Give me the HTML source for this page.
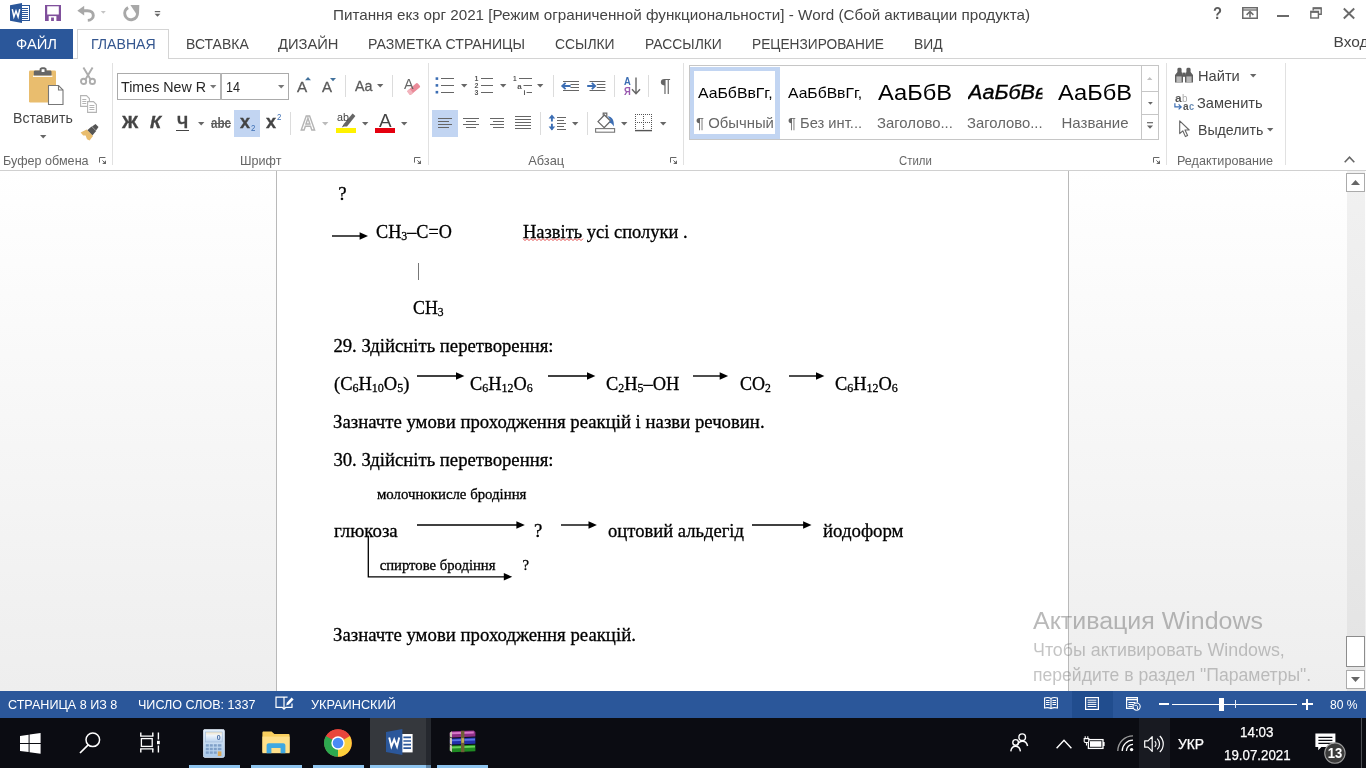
<!DOCTYPE html>
<html lang="ru"><head><meta charset="utf-8"><title>Word</title><style>
html,body{margin:0;padding:0}
body{width:1366px;height:768px;overflow:hidden;position:relative;background:#fff;font-family:"Liberation Sans",sans-serif}
#all{position:absolute;left:0;top:0;width:1366px;height:768px;overflow:hidden;will-change:transform}
.t{position:absolute;white-space:pre;line-height:1;transform-origin:0 0}
.a{position:absolute}
svg{position:absolute;overflow:visible}
sub{font-size:65%;vertical-align:baseline;position:relative;top:0.18em;line-height:0}
</style></head><body><div id="all">
<div class="a" style="left:0;top:29px;width:73px;height:30px;background:#2b579a"></div>
<div class="a" style="left:0;top:58px;width:1366px;height:1px;background:#d4d4d4"></div>
<div class="a" style="left:77px;top:29px;width:92px;height:30px;background:#fff;border:1px solid #d4d4d4;border-bottom:none;box-sizing:border-box"></div>
<div class="a" style="left:0;top:29px;width:73px;height:30px;background:#2b579a"></div>
<svg style="left:10px;top:3px" width="20" height="20" viewBox="0 0 20 20">
<rect x="9" y="2.5" width="10.5" height="15" fill="#fff" stroke="#2b579a" stroke-width="1"/>
<g stroke="#2b579a" stroke-width="1"><path d="M12 5.5h6M12 7.5h6M12 9.5h6M12 11.5h6M12 13.5h6M12 15.5h6"/></g>
<path d="M0 2.2 L12 0 V20 L0 17.8Z" fill="#2b579a"/>
<path d="M2.3 6.2 L3.9 13.8 L6 8 L8.1 13.8 L9.7 6.2" fill="none" stroke="#fff" stroke-width="1.5" stroke-linejoin="miter"/>
</svg>
<svg style="left:45px;top:5px" width="16" height="16" viewBox="0 0 16 16">
<path d="M0 0H16V16H0Z" fill="#80509c"/>
<rect x="2.2" y="1.3" width="11.6" height="8.2" fill="#fff"/>
<rect x="3.7" y="11.1" width="7.7" height="4.9" fill="#fff"/>
<rect x="6.1" y="12.5" width="2.8" height="3.5" fill="#80509c"/>
</svg>
<svg style="left:77px;top:5px" width="32" height="18" viewBox="0 0 32 18">
<path d="M6.5 5.7 H10.5 C14.5 5.7 16.3 8 16.3 10.4 C16.3 13 14 15.2 10.8 15.4" fill="none" stroke="#a8a8a8" stroke-width="2.9"/>
<path d="M0.3 5.8 L7.2 0.8 V10.6 Z" fill="#a8a8a8"/>
<path d="M23.8 6 h5 l-2.5 2.7z" fill="#c4c4c4"/>
</svg>
<svg style="left:122px;top:4px" width="18" height="18" viewBox="0 0 18 18">
<path d="M6.10 3.65 A6.4 6.4 0 1 0 15.48 8.74" fill="none" stroke="#a8a8a8" stroke-width="3"/>
<path d="M8.4 1.1 H17.3 L17 9.6 L14 9.4 Z" fill="#a8a8a8"/>
</svg>
<svg style="left:154px;top:10px" width="7" height="8" viewBox="0 0 7 8">
<rect x="0.8" y="1" width="5.4" height="1.2" fill="#666"/><path d="M0.6 3.8h5.8L3.5 6.8z" fill="#666"/></svg>
<svg style="left:1242px;top:7px" width="16" height="12" viewBox="0 0 16 12">
<rect x="0.75" y="0.75" width="14.5" height="10.5" fill="none" stroke="#6a6a6a" stroke-width="1.5"/>
<path d="M1 3h14" stroke="#6a6a6a" stroke-width="1.3"/>
<path d="M8 10.4V4.8M4.6 7.9 L8 4.5 L11.4 7.9" fill="none" stroke="#6a6a6a" stroke-width="1.5"/></svg>
<div class="a" style="left:1277px;top:14.5px;width:12px;height:2px;background:#6a6a6a"></div>
<svg style="left:1310px;top:7px" width="12" height="12" viewBox="0 0 12 12">
<path d="M3.2 3.5V0.9H11.2V7.3H8.6" fill="none" stroke="#6a6a6a" stroke-width="1.4"/>
<path d="M3.2 1.4H11.2" stroke="#6a6a6a" stroke-width="1.8"/>
<rect x="0.8" y="4.4" width="7.6" height="6.6" fill="none" stroke="#6a6a6a" stroke-width="1.4"/>
<path d="M0.8 5H8.4" stroke="#6a6a6a" stroke-width="1.8"/></svg>
<svg style="left:1343px;top:8px" width="12" height="11" viewBox="0 0 12 11">
<path d="M0.8 0.5 L11.2 10.5 M11.2 0.5 L0.8 10.5" stroke="#6a6a6a" stroke-width="1.9"/></svg>
<svg style="left:1344px;top:156px" width="11" height="7" viewBox="0 0 11 7">
<path d="M0.7 6.3 L5.5 1.2 L10.3 6.3" fill="none" stroke="#666" stroke-width="1.6"/></svg>
<div class="a" style="left:0;top:170px;width:1366px;height:1px;background:#d0d0d0"></div>
<div class="a" style="left:112px;top:63px;width:1px;height:102px;background:#e1e1e1"></div>
<div class="a" style="left:428px;top:63px;width:1px;height:102px;background:#e1e1e1"></div>
<div class="a" style="left:683px;top:63px;width:1px;height:102px;background:#e1e1e1"></div>
<div class="a" style="left:1166px;top:63px;width:1px;height:102px;background:#e1e1e1"></div>
<div class="a" style="left:1285px;top:63px;width:1px;height:102px;background:#e1e1e1"></div>
<svg style="left:28px;top:65px" width="37" height="41" viewBox="0 0 37 41">
<rect x="1" y="5.5" width="27" height="32" rx="1.2" fill="#e9bd6e"/>
<rect x="5" y="10.5" width="19.4" height="1.4" fill="#fff"/>
<path d="M5.8 10.5V7C5.8 6 6.4 5.5 7.4 5.5H11.6V4C11.6 1.6 18.6 1.6 18.6 4V5.5H22C23 5.5 23.5 6 23.5 7V10.5Z" fill="#666"/>
<rect x="13.6" y="4.2" width="2.9" height="2.8" fill="#fff"/>
<path d="M20.5 20.5H30.5L35 25V39.5H20.5Z" fill="#fff" stroke="#777" stroke-width="1.1"/>
<path d="M30.5 20.5V25H35" fill="none" stroke="#777" stroke-width="1.1"/>
</svg>
<svg style="left:39.8px;top:134.6px" width="6.4" height="3.4" viewBox="0 0 6.4 3.4"><path d="M0 0H6.4L3.2 3.4Z" fill="#666"/></svg>
<svg style="left:80px;top:67px" width="16" height="18" viewBox="0 0 16 18">
<g fill="none" stroke="#adadad" stroke-width="1.9"><path d="M3.4 0.6L10.6 12.4M12.6 0.6L5.4 12.4"/><circle cx="3.6" cy="14.4" r="2.6"/><circle cx="12.4" cy="14.4" r="2.6"/></g></svg>
<svg style="left:80px;top:95px" width="18" height="18" viewBox="0 0 18 18">
<g fill="#fff" stroke="#b4b4b4" stroke-width="1.1"><path d="M0.6 0.6H6.5L9.4 3.5V11.4H0.6Z"/><path d="M7.6 6.6H13.5L16.4 9.5V17.4H7.6Z"/></g>
<g stroke="#b4b4b4" stroke-width="1"><path d="M2.3 4.5h4M2.3 6.5h4M2.3 8.5h4M9.4 10.5h5M9.4 12.5h5M9.4 14.5h5"/></g></svg>
<svg style="left:80px;top:124px" width="19" height="17" viewBox="0 0 19 17">
<path d="M12 2.5L15.5 0L18.5 3L16 6.5Z" fill="#555"/>
<path d="M7.2 6.3L11.6 2.4L16.2 7L12.3 11.4Z" fill="#555"/>
<path d="M0.6 8.4L6.6 5.6L13 12L9.6 16.6L7 15.2L5.6 11.4L3.2 11.6Z" fill="#e9bd6e"/>
</svg>
<svg style="left:99px;top:157px" width="8" height="8" viewBox="0 0 8 8"><path d="M0.5 5.6V0.5H6.4" fill="none" stroke="#666" stroke-width="1"/><path d="M7 3.2V7H3.2Z" fill="#666"/><path d="M3.4 3.4L5.4 5.4" stroke="#666" stroke-width="1"/></svg>
<div class="a" style="left:117px;top:73px;width:172px;height:27px;border:1px solid #ababab;box-sizing:border-box;background:#fff"></div>
<div class="a" style="left:220px;top:73px;width:2px;height:27px;background:#b4b4b4"></div>
<svg style="left:209.8px;top:84.6px" width="6.4" height="3.4" viewBox="0 0 6.4 3.4"><path d="M0 0H6.4L3.2 3.4Z" fill="#777"/></svg>
<svg style="left:277.8px;top:84.6px" width="6.4" height="3.4" viewBox="0 0 6.4 3.4"><path d="M0 0H6.4L3.2 3.4Z" fill="#777"/></svg>
<svg style="left:305.2px;top:77px" width="6" height="3.2" viewBox="0 0 6 3.2"><path d="M0 3.2H6L3 0Z" fill="#41719c"/></svg>
<svg style="left:330.3px;top:78px" width="6" height="3.2" viewBox="0 0 6 3.2"><path d="M0 0H6L3 3.2Z" fill="#41719c"/></svg>
<div class="a" style="left:345px;top:75px;width:1px;height:22px;background:#dcdcdc"></div>
<svg style="left:376.8px;top:84.2px" width="6.4" height="3.4" viewBox="0 0 6.4 3.4"><path d="M0 0H6.4L3.2 3.4Z" fill="#666"/></svg>
<div class="a" style="left:392px;top:75px;width:1px;height:22px;background:#dcdcdc"></div>
<svg style="left:406px;top:82px" width="15" height="14" viewBox="0 0 15 14"><g transform="rotate(-40 7.5 7)"><rect x="1" y="4.4" width="13.4" height="5.4" rx="1.2" fill="#ea8a98"/><rect x="1" y="4.4" width="3.8" height="5.4" rx="1.2" fill="#f2b4bd"/></g></svg>
<div class="a" style="left:176px;top:129.6px;width:13px;height:1.6px;background:#444"></div>
<svg style="left:197.8px;top:122.0px" width="6.4" height="3.4" viewBox="0 0 6.4 3.4"><path d="M0 0H6.4L3.2 3.4Z" fill="#666"/></svg>
<div class="a" style="left:234px;top:110px;width:26px;height:27px;background:#c2d5f2"></div>
<div class="a" style="left:290px;top:112px;width:1px;height:23px;background:#dcdcdc"></div>
<svg style="left:299px;top:112px" width="18" height="20" viewBox="0 0 18 20"><text x="9" y="18.2" text-anchor="middle" font-family="Liberation Sans" font-size="20.5" font-weight="bold" fill="#fff" stroke="#b4b4b4" stroke-width="1.4" textLength="14.4" lengthAdjust="spacingAndGlyphs">A</text></svg>
<svg style="left:321.8px;top:122.0px" width="6.4" height="3.4" viewBox="0 0 6.4 3.4"><path d="M0 0H6.4L3.2 3.4Z" fill="#bbb"/></svg>
<svg style="left:341px;top:113px" width="16" height="15" viewBox="0 0 16 15"><path d="M11.6 0.6L14.4 3L6 13.4L2.8 13.6L3.2 10.6Z" fill="#666"/><path d="M2.8 13.6L0.8 14.4L3.2 10.6Z" fill="#444"/></svg>
<div class="a" style="left:336px;top:128px;width:20px;height:5px;background:#fff200"></div>
<svg style="left:361.8px;top:122.0px" width="6.4" height="3.4" viewBox="0 0 6.4 3.4"><path d="M0 0H6.4L3.2 3.4Z" fill="#666"/></svg>
<div class="a" style="left:375px;top:128px;width:20.2px;height:5px;background:#e5000f"></div>
<svg style="left:400.8px;top:122.0px" width="6.4" height="3.4" viewBox="0 0 6.4 3.4"><path d="M0 0H6.4L3.2 3.4Z" fill="#666"/></svg>
<svg style="left:413.5px;top:157px" width="8" height="8" viewBox="0 0 8 8"><path d="M0.5 5.6V0.5H6.4" fill="none" stroke="#666" stroke-width="1"/><path d="M7 3.2V7H3.2Z" fill="#666"/><path d="M3.4 3.4L5.4 5.4" stroke="#666" stroke-width="1"/></svg>
<svg style="left:435px;top:76px" width="20" height="19" viewBox="0 0 20 19">
<g fill="#3c6eb4"><rect x="0.6" y="1.3" width="2.6" height="2.6"/><rect x="0.6" y="8.1" width="2.6" height="2.6"/><rect x="0.6" y="14.9" width="2.6" height="2.6"/></g>
<path d="M6 2.5H19M6 9.5H19M6 16.5H19" stroke="#666" stroke-width="1"/></svg>
<svg style="left:460.8px;top:84.2px" width="6.4" height="3.4" viewBox="0 0 6.4 3.4"><path d="M0 0H6.4L3.2 3.4Z" fill="#666"/></svg>
<svg style="left:474px;top:75px" width="20" height="21" viewBox="0 0 20 21">
<g font-family="Liberation Sans" font-size="7" font-weight="bold" fill="#555"><text x="0.4" y="6.4">1</text><text x="0.4" y="13.2">2</text><text x="0.4" y="20">3</text></g>
<path d="M7 3.5H19M7 10.5H19M7 17.5H19" stroke="#666" stroke-width="1"/></svg>
<svg style="left:499.8px;top:84.2px" width="6.4" height="3.4" viewBox="0 0 6.4 3.4"><path d="M0 0H6.4L3.2 3.4Z" fill="#666"/></svg>
<svg style="left:513px;top:75px" width="20" height="21" viewBox="0 0 20 21">
<g font-family="Liberation Sans" font-weight="bold" fill="#555"><text x="0" y="6.2" font-size="6.5">1</text><text x="4.2" y="13.6" font-size="8">a</text><text x="10.6" y="20.4" font-size="7">i</text></g>
<path d="M6 3.5H19M10.5 10.5H19M13.6 17.5H19" stroke="#666" stroke-width="1"/></svg>
<svg style="left:536.8px;top:84.2px" width="6.4" height="3.4" viewBox="0 0 6.4 3.4"><path d="M0 0H6.4L3.2 3.4Z" fill="#666"/></svg>
<div class="a" style="left:553px;top:75px;width:1px;height:22px;background:#dcdcdc"></div>
<svg style="left:561px;top:79px" width="19" height="14" viewBox="0 0 19 14">
<path d="M2 2.5H18M9.5 5.5H18M9.5 8.5H18M2 11.5H18" stroke="#666" stroke-width="1"/>
<path d="M9.6 7H1.6M4.6 3.8L1.2 7L4.6 10.2" fill="none" stroke="#3c6eb4" stroke-width="1.8"/></svg>
<svg style="left:587px;top:79px" width="19" height="14" viewBox="0 0 19 14">
<path d="M2.5 2.5H18.4M9.8 5.5H18.4M9.8 8.5H18.4M2.5 11.5H18.4" stroke="#666" stroke-width="1"/>
<path d="M0.2 7H7.8M4.8 3.8L8.2 7L4.8 10.2" fill="none" stroke="#3c6eb4" stroke-width="1.8"/></svg>
<div class="a" style="left:614px;top:75px;width:1px;height:22px;background:#dcdcdc"></div>
<svg style="left:631px;top:77px" width="10" height="18" viewBox="0 0 10 18"><path d="M5 0.5V16.5M1 12.2L5 16.8L9 12.2" fill="none" stroke="#666" stroke-width="1.4"/></svg>
<div class="a" style="left:648px;top:75px;width:1px;height:22px;background:#dcdcdc"></div>
<div class="a" style="left:432px;top:110px;width:26px;height:27px;background:#c2d5f2"></div>
<svg style="left:438px;top:115px" width="15" height="15" viewBox="0 0 15 15"><path d="M0 3.5H14M0 6.5H11M0 9.5H14M0 12.5H11" stroke="#666" stroke-width="1"/></svg>
<svg style="left:463px;top:115px" width="16" height="15" viewBox="0 0 16 15"><path d="M0 3.5H16M3 6.5H13M0 9.5H16M3 12.5H13" stroke="#666" stroke-width="1"/></svg>
<svg style="left:490px;top:115px" width="14" height="15" viewBox="0 0 14 15"><path d="M0 3.5H14M3 6.5H14M0 9.5H14M3 12.5H14" stroke="#666" stroke-width="1"/></svg>
<svg style="left:515px;top:115px" width="16" height="15" viewBox="0 0 16 15"><path d="M0 1.5H16M0 4.5H16M0 7.5H16M0 10.5H16M0 13.5H16" stroke="#666" stroke-width="1"/></svg>
<div class="a" style="left:540px;top:112px;width:1px;height:23px;background:#dcdcdc"></div>
<svg style="left:548px;top:113px" width="19" height="19" viewBox="0 0 19 19">
<path d="M3.9 3V8.4M3.9 10.8V16.4" fill="none" stroke="#3c6eb4" stroke-width="1.9"/>
<path d="M0.6 5.6L3.9 1.6L7.2 5.6ZM0.6 13.6L3.9 17.6L7.2 13.6Z" fill="#3c6eb4"/>
<path d="M9 4.5H18M9 7.5H16M9 10.5H18M9 13.5H16M9 16.5H18" stroke="#666" stroke-width="1"/></svg>
<svg style="left:571.8px;top:122.0px" width="6.4" height="3.4" viewBox="0 0 6.4 3.4"><path d="M0 0H6.4L3.2 3.4Z" fill="#666"/></svg>
<div class="a" style="left:587px;top:112px;width:1px;height:23px;background:#dcdcdc"></div>
<svg style="left:595px;top:112px" width="21" height="21" viewBox="0 0 21 21">
<path d="M8.2 3.4V1.2H11.8V4.8" fill="none" stroke="#666" stroke-width="1.2"/>
<path d="M3 9.6L9.4 3L15.6 9L9.2 15.6Z" fill="#fff" stroke="#666" stroke-width="1.3"/>
<path d="M12.6 4.2C17 4.6 19.4 8 18.8 14.6C17.6 12 16.2 11 14 10.4L15.8 8.6Z" fill="#3c6eb4"/>
<rect x="0.6" y="16.6" width="19" height="3.6" fill="#fff" stroke="#777" stroke-width="1.1"/></svg>
<svg style="left:620.8px;top:122.0px" width="6.4" height="3.4" viewBox="0 0 6.4 3.4"><path d="M0 0H6.4L3.2 3.4Z" fill="#666"/></svg>
<svg style="left:635px;top:114px" width="18" height="18" viewBox="0 0 18 18">
<path d="M0 0.5H17M0 8.5H17" fill="none" stroke="#555" stroke-width="1" stroke-dasharray="1 1"/>
<path d="M0.5 0V16M8.5 0V16M16.5 0V16" fill="none" stroke="#555" stroke-width="1" stroke-dasharray="1 1"/>
<path d="M0 16.6H17" stroke="#555" stroke-width="1.4"/></svg>
<svg style="left:659.8px;top:122.0px" width="6.4" height="3.4" viewBox="0 0 6.4 3.4"><path d="M0 0H6.4L3.2 3.4Z" fill="#666"/></svg>
<svg style="left:670px;top:157px" width="8" height="8" viewBox="0 0 8 8"><path d="M0.5 5.6V0.5H6.4" fill="none" stroke="#666" stroke-width="1"/><path d="M7 3.2V7H3.2Z" fill="#666"/><path d="M3.4 3.4L5.4 5.4" stroke="#666" stroke-width="1"/></svg>
<div class="a" style="left:689px;top:65px;width:470px;height:75px;border:1px solid #c6c6c6;box-sizing:border-box;background:#fff"></div>
<div class="a" style="left:690px;top:67px;width:90px;height:71.5px;border:solid #c2d5f2;border-width:4.8px 5px 5.6px 4.8px;box-sizing:border-box;background:#fff"></div>
<div class="a" style="left:695.5px;top:116px;width:7px;height:13px;background:rgba(255,255,255,.35)"></div>
<div class="a" style="left:1141px;top:65px;width:1px;height:75px;background:#c6c6c6"></div>
<div class="a" style="left:1141px;top:91px;width:18px;height:1px;background:#c6c6c6"></div>
<div class="a" style="left:1141px;top:114px;width:18px;height:1px;background:#c6c6c6"></div>
<svg style="left:1147.4px;top:76.5px" width="5.4" height="3" viewBox="0 0 5.4 3"><path d="M0 3H5.4L2.7 0Z" fill="#c0c0c0"/></svg>
<svg style="left:1147.6px;top:101.5px" width="4.8" height="2.8" viewBox="0 0 4.8 2.8"><path d="M0 0H4.8L2.4 2.8Z" fill="#666"/></svg>
<svg style="left:1147px;top:122px" width="6" height="8" viewBox="0 0 6 8"><path d="M0 0.7H6" stroke="#666" stroke-width="1.2"/><path d="M0 3.4H6L3 6.8Z" fill="#666"/></svg>
<svg style="left:1152.5px;top:157px" width="8" height="8" viewBox="0 0 8 8"><path d="M0.5 5.6V0.5H6.4" fill="none" stroke="#666" stroke-width="1"/><path d="M7 3.2V7H3.2Z" fill="#666"/><path d="M3.4 3.4L5.4 5.4" stroke="#666" stroke-width="1"/></svg>
<svg style="left:1174px;top:67px" width="20" height="17" viewBox="0 0 20 17">
<path d="M3.4 2.2C3.4 0.4 7.6 0.4 7.6 2.2V5L9 8V15.6H1V8L3.4 5Z" fill="#5f5f5f"/>
<path d="M12.4 2.2C12.4 0.4 16.6 0.4 16.6 2.2V5L19 8V15.6H11V8L12.4 5Z" fill="#5f5f5f"/>
<rect x="8.4" y="5.6" width="3.2" height="4.2" fill="#5f5f5f"/>
<rect x="2.4" y="9.4" width="5.2" height="6.2" fill="#b9b9b9"/><rect x="12.4" y="9.4" width="5.2" height="6.2" fill="#b9b9b9"/>
</svg>
<svg style="left:1249.8px;top:74.0px" width="6.4" height="3.4" viewBox="0 0 6.4 3.4"><path d="M0 0H6.4L3.2 3.4Z" fill="#666"/></svg>
<svg style="left:1174px;top:102.6px" width="9" height="8" viewBox="0 0 9 8"><path d="M0.9 0.2V3.9H7M4.6 1.4L7.2 3.9L4.6 6.4" fill="none" stroke="#3c6eb4" stroke-width="1.2"/></svg>
<svg style="left:1178.5px;top:120px" width="12" height="18" viewBox="0 0 12 18">
<path d="M0.7 0.8V13.6L3.8 10.8L6.4 16.6L8.6 15.6L6 10H10.2Z" fill="#fff" stroke="#666" stroke-width="1.1" stroke-linejoin="round"/></svg>
<svg style="left:1267.3px;top:128.0px" width="6.4" height="3.4" viewBox="0 0 6.4 3.4"><path d="M0 0H6.4L3.2 3.4Z" fill="#666"/></svg>
<div class="a" style="left:0;top:171px;width:1366px;height:520px;background:linear-gradient(#ffffff,#eeeeee)"></div>
<div class="a" style="left:276px;top:171px;width:793px;height:520px;background:#fff;border-left:1px solid #b9b9b9;border-right:1px solid #b9b9b9;box-sizing:border-box"></div>
<svg style="left:332px;top:230.5px" width="36.0" height="10" viewBox="0 0 36.0 10"><path d="M0 5H28.6" stroke="#000" stroke-width="1.4"/><path d="M27.6 1.2000000000000002L36.0 5L27.6 8.8Z" fill="#000"/></svg>
<svg style="left:416.6px;top:371.2px" width="47.4" height="10" viewBox="0 0 47.4 10"><path d="M0 5H40.0" stroke="#000" stroke-width="1.4"/><path d="M39.0 1.2000000000000002L47.4 5L39.0 8.8Z" fill="#000"/></svg>
<svg style="left:548.4px;top:371.2px" width="47.4" height="10" viewBox="0 0 47.4 10"><path d="M0 5H40.0" stroke="#000" stroke-width="1.4"/><path d="M39.0 1.2000000000000002L47.4 5L39.0 8.8Z" fill="#000"/></svg>
<svg style="left:692.7px;top:371.2px" width="35.1" height="10" viewBox="0 0 35.1 10"><path d="M0 5H27.7" stroke="#000" stroke-width="1.4"/><path d="M26.7 1.2000000000000002L35.1 5L26.7 8.8Z" fill="#000"/></svg>
<svg style="left:788.6px;top:371.2px" width="35.4" height="10" viewBox="0 0 35.4 10"><path d="M0 5H28.0" stroke="#000" stroke-width="1.4"/><path d="M27.0 1.2000000000000002L35.4 5L27.0 8.8Z" fill="#000"/></svg>
<svg style="left:416.6px;top:519.6px" width="107.8" height="10" viewBox="0 0 107.8 10"><path d="M0 5H100.4" stroke="#000" stroke-width="1.4"/><path d="M99.4 1.2000000000000002L107.8 5L99.4 8.8Z" fill="#000"/></svg>
<svg style="left:560.5px;top:519.6px" width="35.9" height="10" viewBox="0 0 35.9 10"><path d="M0 5H28.5" stroke="#000" stroke-width="1.4"/><path d="M27.5 1.2000000000000002L35.9 5L27.5 8.8Z" fill="#000"/></svg>
<svg style="left:752.4px;top:519.6px" width="59.5" height="10" viewBox="0 0 59.5 10"><path d="M0 5H52.1" stroke="#000" stroke-width="1.4"/><path d="M51.1 1.2000000000000002L59.5 5L51.1 8.8Z" fill="#000"/></svg>
<svg style="left:360px;top:530px" width="160" height="55" viewBox="0 0 160 55"><path d="M8.3 5.5V46.8H145" fill="none" stroke="#000" stroke-width="1.3"/><path d="M143.8 43L152.2 46.8L143.8 50.6Z" fill="#000"/></svg>
<div class="a" style="left:418px;top:263px;width:1.2px;height:16.5px;background:#777"></div>
<svg style="left:523px;top:238.4px" width="60" height="4" viewBox="0 0 60 4"><path d="M0 0.6 L2 2.6 L4 0.6 L6 2.6 L8 0.6 L10 2.6 L12 0.6 L14 2.6 L16 0.6 L18 2.6 L20 0.6 L22 2.6 L24 0.6 L26 2.6 L28 0.6 L30 2.6 L32 0.6 L34 2.6 L36 0.6 L38 2.6 L40 0.6 L42 2.6 L44 0.6 L46 2.6 L48 0.6 L50 2.6 L52 0.6 L54 2.6 L56 0.6 L58 2.6 L60 0.6" fill="none" stroke="#e03a3a" stroke-width="0.9"/></svg>
<div class="a" style="left:1347px;top:171px;width:17.5px;height:520px;background:linear-gradient(#f1f1f1,#e3e3e3)"></div>
<div class="a" style="left:1346px;top:173px;width:19px;height:19px;border:1px solid #ababab;box-sizing:border-box;background:#fff"></div>
<svg style="left:1351px;top:180px" width="9" height="5" viewBox="0 0 9 5"><path d="M0 5H9L4.5 0Z" fill="#666"/></svg>
<div class="a" style="left:1346px;top:636px;width:19px;height:31px;border:1px solid #8c8c8c;box-sizing:border-box;background:#fff"></div>
<div class="a" style="left:1346px;top:670px;width:19px;height:19px;border:1px solid #ababab;box-sizing:border-box;background:#fff"></div>
<svg style="left:1351px;top:677px" width="9" height="5" viewBox="0 0 9 5"><path d="M0 0H9L4.5 5Z" fill="#666"/></svg>
<div class="a" style="left:0;top:691px;width:1366px;height:27px;background:#2b579a"></div>
<div class="a" style="left:0;top:718px;width:1366px;height:50px;background:#0b0c12"></div>
<svg style="left:274.5px;top:696px" width="20" height="15" viewBox="0 0 20 15">
<path d="M9 1.2H1V11.4H7.2L9 13.2L10.8 11.4H17V7.6M9 1.2V12.6M9 1.2H12.6" fill="none" stroke="#fff" stroke-width="1.2"/>
<path d="M11.2 9.4L11.8 6.8L16.6 1.6L18.6 3.4L13.8 8.6Z" fill="#fff"/></svg>
<svg style="left:1043.5px;top:697px" width="14" height="13" viewBox="0 0 14 13">
<path d="M7 1.4C5 0.4 2.6 0.4 0.6 1V11C2.6 10.4 5 10.4 7 11.6C9 10.4 11.4 10.4 13.4 11V1C11.4 0.4 9 0.4 7 1.4ZM7 1.4V11.6" fill="none" stroke="#fff" stroke-width="1.1"/>
<path d="M2 3.5H5.6M2 5.5H5.6M2 7.5H5.6M8.4 3.5H12M8.4 5.5H12M8.4 7.5H12" stroke="#fff" stroke-width="1"/></svg>
<div class="a" style="left:1072px;top:691px;width:40.5px;height:27px;background:#214d8e"></div>
<svg style="left:1085px;top:697px" width="14" height="13" viewBox="0 0 14 13">
<rect x="0.6" y="0.6" width="12.8" height="11.8" fill="none" stroke="#fff" stroke-width="1.2"/>
<path d="M2.6 3.2H11.4M2.6 5.3H11.4M2.6 7.4H11.4M2.6 9.5H11.4" stroke="#fff" stroke-width="1"/></svg>
<svg style="left:1126px;top:697px" width="15" height="14" viewBox="0 0 15 14">
<path d="M8 11.4H0.6V0.6H11.4V5.4" fill="none" stroke="#fff" stroke-width="1.2"/>
<path d="M0.6 2.6H11.4" stroke="#fff" stroke-width="1.4"/>
<path d="M2.4 5.5H9.4M2.4 7.5H7M2.4 9.5H6.4" stroke="#fff" stroke-width="1"/>
<circle cx="10.6" cy="9.6" r="3.6" fill="#2b579a" stroke="#fff" stroke-width="1.1"/>
<path d="M8.4 8.2C9.6 8.8 10.4 8 11.2 8.8C12 9.6 11 10.6 11.6 12" fill="none" stroke="#fff" stroke-width="1"/></svg>
<div class="a" style="left:1159px;top:703px;width:9.5px;height:2px;background:#fff"></div>
<div class="a" style="left:1172px;top:703.5px;width:125px;height:1px;background:#fff"></div>
<div class="a" style="left:1219px;top:697.5px;width:5px;height:13.5px;background:#fff"></div>
<div class="a" style="left:1234.5px;top:700px;width:1px;height:8px;background:#e8eef7"></div>
<div class="a" style="left:1301.5px;top:703px;width:11px;height:2px;background:#fff"></div>
<div class="a" style="left:1306px;top:698.5px;width:2px;height:11px;background:#fff"></div>
<svg style="left:19.5px;top:733px" width="21" height="21" viewBox="0 0 21 21">
<path d="M0 2.9L8.6 1.7V9.9H0ZM9.6 1.5L20.6 0V9.9H9.6ZM0 10.9H8.6V19.1L0 17.9ZM9.6 10.9H20.6V20.8L9.6 19.3Z" fill="#fff"/></svg>
<svg style="left:78px;top:731px" width="24" height="24" viewBox="0 0 24 24">
<circle cx="14.8" cy="8.8" r="6.8" fill="none" stroke="#fff" stroke-width="1.5"/><path d="M10.2 13.8L2 22" stroke="#fff" stroke-width="1.7"/></svg>
<svg style="left:139.5px;top:732px" width="21" height="21" viewBox="0 0 21 21">
<path d="M0.8 0.6V4.2M12.8 0.6V4.2M0.8 16.8V20.4M12.8 16.8V20.4" stroke="#fff" stroke-width="1.4"/>
<path d="M0.2 4.2H13.4M0.2 16.8H13.4" stroke="#fff" stroke-width="1.3"/>
<rect x="1.4" y="6.6" width="10.8" height="7.8" fill="none" stroke="#fff" stroke-width="1.3"/>
<path d="M18.4 0.6V7.6M18.4 13.4V20.4" stroke="#fff" stroke-width="1.4"/><rect x="17" y="8.8" width="2.8" height="3.4" fill="#fff"/></svg>
<div class="a" style="left:189px;top:765px;width:51px;height:3px;background:#8ec4ee"></div>
<div class="a" style="left:251px;top:765px;width:51px;height:3px;background:#8ec4ee"></div>
<div class="a" style="left:313px;top:765px;width:51px;height:3px;background:#8ec4ee"></div>
<div class="a" style="left:437px;top:765px;width:51px;height:3px;background:#8ec4ee"></div>
<div class="a" style="left:370px;top:718px;width:56px;height:50px;background:#35383d"></div>
<div class="a" style="left:426px;top:718px;width:5px;height:50px;background:#25282e"></div>
<div class="a" style="left:370px;top:765px;width:56px;height:3px;background:#8ec4ee"></div>
<div class="a" style="left:426px;top:765px;width:5px;height:3px;background:#5f86a8"></div>
<svg style="left:203px;top:728.5px" width="22" height="29" viewBox="0 0 22 29">
<defs><linearGradient id="cg" x1="0" y1="0" x2="0" y2="1"><stop offset="0" stop-color="#e4effa"/><stop offset="1" stop-color="#a9c9ea"/></linearGradient>
<linearGradient id="cd" x1="0" y1="0" x2="0" y2="1"><stop offset="0" stop-color="#f6e6c4"/><stop offset="0.35" stop-color="#eef4fb"/><stop offset="1" stop-color="#b9d2ee"/></linearGradient></defs>
<rect x="0.4" y="0.4" width="21" height="28" rx="1.6" fill="url(#cg)" stroke="#dfeaf6" stroke-width="0.8"/>
<rect x="2.6" y="3" width="16.6" height="10" fill="url(#cd)" stroke="#9db6d2" stroke-width="0.6"/>
<text x="17.6" y="11.2" font-family="Liberation Sans" font-size="7" font-weight="bold" fill="#4a6fa5" text-anchor="end">0</text>
<g fill="#7fa0c8"><rect x="2.8" y="15.2" width="3" height="2.4"/><rect x="6.8" y="15.2" width="3" height="2.4"/><rect x="10.8" y="15.2" width="3" height="2.4"/><rect x="14.8" y="15.2" width="3.6" height="2.4"/>
<rect x="2.8" y="18.8" width="3" height="2.4"/><rect x="6.8" y="18.8" width="3" height="2.4"/><rect x="10.8" y="18.8" width="3" height="2.4"/><rect x="14.8" y="18.8" width="3.6" height="2.4"/>
<rect x="2.8" y="22.4" width="3" height="2.4"/><rect x="6.8" y="22.4" width="3" height="2.4"/><rect x="10.8" y="22.4" width="3" height="2.4"/></g>
<rect x="14.8" y="22.4" width="3.6" height="4.6" fill="#d9a85a"/>
</svg>
<svg style="left:262px;top:731px" width="28" height="23" viewBox="0 0 28 23">
<path d="M0.4 1.6C0.4 0.8 0.9 0.4 1.6 0.4H9.6L12.4 3H26.4C27.1 3 27.6 3.5 27.6 4.2V21.2H0.4Z" fill="#f9cf5e"/>
<path d="M0.4 5.6H27.6V22.2H0.4Z" fill="#ffe08a"/>
<path d="M4.6 22.2V14.4C4.6 13 5.6 12.2 6.8 12.2H21.2C22.4 12.2 23.4 13 23.4 14.4V22.2H18.6V17H9.4V22.2Z" fill="#3fa8e2"/>
</svg>
<svg style="left:324px;top:729px" width="28" height="28" viewBox="-14 -14 28 28">
<circle r="13.8" fill="#e8453c"/>
<path d="M0 0L-11.95 -6.9A13.8 13.8 0 0 0 0 13.8Z" fill="#2da94f"/>
<path d="M0 0L0 13.8A13.8 13.8 0 0 0 11.95 -6.9Z" fill="#fdd03b"/>
<path d="M0 0L-11.95 -6.9A13.8 13.8 0 0 0 -6.3 12.3L0 1.4Z" fill="#2da94f"/>
<path d="M-11.95 -6.9A13.8 13.8 0 0 1 11.95 -6.9L0 -6.9L-5.9 -3.4Z" fill="#e8453c"/>
<circle r="6.7" fill="#fff"/><circle r="5.3" fill="#4a8af4"/></svg>
<svg style="left:385.5px;top:729px" width="27" height="26" viewBox="0 0 27 26">
<rect x="15" y="5" width="11.6" height="18.4" fill="#fff"/>
<path d="M17.4 8.4H25M17.4 12H25M17.4 15.6H25M17.4 19.2H25" stroke="#2b579a" stroke-width="1.7"/>
<path d="M0 3L16.4 0V26L0 23Z" fill="#2b579a"/>
<path d="M3.2 8.6L5.4 17.6L8.2 10.4L11 17.6L13.2 8.6" fill="none" stroke="#fff" stroke-width="1.9"/></svg>
<svg style="left:448.5px;top:729.5px" width="27" height="23" viewBox="0 0 27 23">
<path d="M3 1.2L24.6 0.4L26.4 2V6.6L3 7.4L0.8 5.8V2.8Z" fill="#8e2f86"/><path d="M3 2.2L24.8 1.4V3.4L3 4.2Z" fill="#d877c8"/>
<path d="M3 8.4L26.4 7.6V13.8L3 14.6L0.8 13V9.8Z" fill="#2230a8"/><path d="M3 9.4L26 8.6V10.4L3 11.2Z" fill="#5a74e6"/>
<path d="M3 15.6L26.4 14.8V21.2L3 22.2L0.8 20.6V17.2Z" fill="#1f8a22"/><path d="M3 16.6L26 15.8V17.6L3 18.4Z" fill="#6ad458"/>
<path d="M0.8 2.8L3 1.2V22.2L0.8 20.6Z" fill="#cfc6b4"/>
<path d="M0.8 7.2L3 7.9M0.8 14.3L3 15.1" stroke="#222" stroke-width="0.8"/>
<rect x="12" y="0.8" width="3.4" height="21.4" fill="#6e5f34"/><rect x="12.4" y="8.2" width="2.6" height="4.6" fill="#c4ae58"/>
</svg>
<svg style="left:1010px;top:733px" width="19" height="19" viewBox="0 0 19 19">
<g fill="none" stroke="#fff" stroke-width="1.4"><circle cx="12.2" cy="4.2" r="3.3"/><path d="M7.4 12.4C8.2 9.4 10 8.2 12.4 8.2C15 8.2 17 10 17.6 13"/><circle cx="5.6" cy="9.4" r="2.8"/><path d="M0.8 18.4C1.2 15 3 13.2 5.6 13.2C8.2 13.2 10 15 10.4 18.4"/></g></svg>
<svg style="left:1056px;top:738.5px" width="16" height="10" viewBox="0 0 16 10"><path d="M0.6 9.2L8 1.2L15.4 9.2" fill="none" stroke="#fff" stroke-width="1.4"/></svg>
<svg style="left:1084px;top:736px" width="21" height="14" viewBox="0 0 21 14">
<rect x="4.4" y="3.6" width="14.6" height="8.8" fill="none" stroke="#fff" stroke-width="1.3"/><rect x="6" y="5.2" width="11.4" height="5.6" fill="#fff"/><rect x="19" y="6" width="1.6" height="4" fill="#fff"/>
<path d="M1.2 0.2V2.6M3.8 0.2V2.6M0.2 2.6H4.8V5.4C4.8 7 0.2 7 0.2 5.4ZM2.5 6.6V9.4" fill="#0b0c12" stroke="#fff" stroke-width="1.1"/></svg>
<svg style="left:1117px;top:735px" width="17" height="17" viewBox="0 0 17 17">
<g fill="none" stroke="#fff" stroke-width="1.3"><path d="M0.8 16A15.2 15.2 0 0 1 16 0.8" stroke="#9a9a9a"/><path d="M5.2 16A10.8 10.8 0 0 1 16 5.2"/><path d="M9.4 16A6.6 6.6 0 0 1 16 9.4"/></g><circle cx="14.6" cy="14.6" r="1.7" fill="#fff"/></svg>
<div class="a" style="left:1138.5px;top:718px;width:31px;height:50px;background:#181a21"></div>
<svg style="left:1144px;top:734.5px" width="21" height="18" viewBox="0 0 21 18">
<path d="M0.7 5.8H4L8.2 1.6V16.4L4 12.2H0.7Z" fill="none" stroke="#fff" stroke-width="1.2" stroke-linejoin="round"/>
<g fill="none" stroke="#fff" stroke-width="1.2"><path d="M10.8 6.2A4 4 0 0 1 10.8 11.8"/><path d="M13.2 3.6A7.4 7.4 0 0 1 13.2 14.4"/><path d="M15.8 1A11 11 0 0 1 15.8 17"/></g></svg>
<svg style="left:1314.5px;top:733px" width="32" height="32" viewBox="0 0 32 32">
<path d="M0.4 0.6H20.4V14H6.4L3.2 17.2V14H0.4Z" fill="#fff"/>
<path d="M3.4 4.4H17.4M3.4 7.4H17.4M3.4 10.4H17.4" stroke="#0b0c12" stroke-width="1.1"/>
<circle cx="19.9" cy="20.1" r="10.2" fill="#3b3b3b" stroke="#9b9b9b" stroke-width="1.1"/>
<text x="19.9" y="25.2" font-family="Liberation Sans" font-size="14.5" font-weight="bold" fill="#fff" text-anchor="middle" textLength="14.5" lengthAdjust="spacingAndGlyphs">13</text></svg>
<div class="a" style="left:1361px;top:718px;width:1px;height:50px;background:#4a4c52"></div>
<div class="t" style="left:333.0px;top:7.0px;font-size:15px;color:#444;transform:scaleX(1.0148);">Питання екз орг 2021 [Режим ограниченной функциональности] - Word (Сбой активации продукта)</div>
<div class="t" style="left:15.5px;top:36.0px;font-size:15px;color:#fff;transform:scaleX(0.9828);">ФАЙЛ</div>
<div class="t" style="left:90.5px;top:36.0px;font-size:15px;color:#34568f;transform:scaleX(0.9402);">ГЛАВНАЯ</div>
<div class="t" style="left:185.7px;top:36.0px;font-size:15px;color:#444;transform:scaleX(0.9336);">ВСТАВКА</div>
<div class="t" style="left:277.9px;top:36.0px;font-size:15px;color:#444;transform:scaleX(0.9817);">ДИЗАЙН</div>
<div class="t" style="left:368.4px;top:36.0px;font-size:15px;color:#444;transform:scaleX(0.9403);">РАЗМЕТКА СТРАНИЦЫ</div>
<div class="t" style="left:554.8px;top:36.0px;font-size:15px;color:#444;transform:scaleX(0.9267);">ССЫЛКИ</div>
<div class="t" style="left:644.6px;top:36.0px;font-size:15px;color:#444;transform:scaleX(0.9255);">РАССЫЛКИ</div>
<div class="t" style="left:751.6px;top:36.0px;font-size:15px;color:#444;transform:scaleX(0.9143);">РЕЦЕНЗИРОВАНИЕ</div>
<div class="t" style="left:913.6px;top:36.0px;font-size:15px;color:#444;transform:scaleX(0.9240);">ВИД</div>
<div class="t" style="left:1333.5px;top:34.0px;font-size:15.5px;color:#444;">Вход</div>
<div class="t" style="left:1212.5px;top:5.0px;font-size:16.5px;color:#5c5c5c;font-weight:bold;transform:scaleX(0.8916);">?</div>
<div class="t" style="left:3.4px;top:155.0px;font-size:12.8px;color:#666;transform:scaleX(0.9843);">Буфер обмена</div>
<div class="t" style="left:239.6px;top:155.0px;font-size:12.8px;color:#666;transform:scaleX(0.9832);">Шрифт</div>
<div class="t" style="left:528.2px;top:155.0px;font-size:12.8px;color:#666;">Абзац</div>
<div class="t" style="left:898.7px;top:155.0px;font-size:12.8px;color:#666;transform:scaleX(0.8895);">Стили</div>
<div class="t" style="left:1177.0px;top:155.0px;font-size:12.8px;color:#666;transform:scaleX(0.9848);">Редактирование</div>
<div class="t" style="left:12.6px;top:110.0px;font-size:15px;color:#444;transform:scaleX(0.9403);">Вставить</div>
<div class="t" style="left:120.5px;top:79.0px;font-size:15.2px;color:#262626;transform:scaleX(0.9384);">Times New R</div>
<div class="t" style="left:225.6px;top:79.0px;font-size:15.2px;color:#262626;transform:scaleX(0.8281);">14</div>
<div class="t" style="left:297.2px;top:80.0px;font-size:14.4px;color:#5a5a5a;transform:scaleX(1.0615);-webkit-text-stroke:0.3px #5a5a5a;">A</div>
<div class="t" style="left:322.3px;top:80.0px;font-size:14.4px;color:#5a5a5a;transform:scaleX(1.0407);-webkit-text-stroke:0.3px #5a5a5a;">A</div>
<div class="t" style="left:354.6px;top:79.0px;font-size:14.6px;color:#5a5a5a;transform:scaleX(0.9743);-webkit-text-stroke:0.3px #5a5a5a;">Aa</div>
<div class="t" style="left:404.0px;top:76.0px;font-size:15.5px;color:#666;transform:scaleX(0.9281);">A</div>
<div class="t" style="left:122.0px;top:115.0px;font-size:16px;color:#444;font-weight:bold;transform:scaleX(1.1197);-webkit-text-stroke:0.35px #444;">Ж</div>
<div class="t" style="left:150.4px;top:115.0px;font-size:16px;color:#444;font-weight:bold;font-style:italic;transform:scaleX(1.1276);-webkit-text-stroke:0.35px #444;">К</div>
<div class="t" style="left:177.0px;top:115.0px;font-size:16px;color:#444;font-weight:bold;transform:scaleX(0.9778);-webkit-text-stroke:0.35px #444;">Ч</div>
<div class="t" style="left:211.0px;top:116.0px;font-size:14.5px;color:#5c5c5c;font-weight:bold;transform:scaleX(0.8000);text-decoration:line-through;">abc</div>
<div class="t" style="left:240.0px;top:113.0px;font-size:18px;color:#444;font-weight:bold;-webkit-text-stroke:0.35px #444;">x</div>
<div class="t" style="left:250.6px;top:124.0px;font-size:8.5px;color:#3c6eb4;transform:scaleX(0.9294);">2</div>
<div class="t" style="left:266.0px;top:113.0px;font-size:18px;color:#444;font-weight:bold;-webkit-text-stroke:0.35px #444;">x</div>
<div class="t" style="left:276.6px;top:113.0px;font-size:8.5px;color:#3c6eb4;transform:scaleX(0.9294);">2</div>
<div class="t" style="left:337.0px;top:112.0px;font-size:11.5px;color:#444;transform:scaleX(0.9377);">ab</div>
<div class="t" style="left:378.6px;top:112.0px;font-size:18px;color:#444;transform:scaleX(1.0486);">A</div>
<div class="t" style="left:624.0px;top:76.0px;font-size:10.5px;color:#3c6eb4;font-weight:bold;transform:scaleX(0.8955);">A</div>
<div class="t" style="left:624.0px;top:86.0px;font-size:10.5px;color:#9a5ab0;font-weight:bold;transform:scaleX(0.9010);">Я</div>
<div class="t" style="left:659.5px;top:76.0px;font-size:19px;color:#666;transform:scaleX(1.0765);">¶</div>
<div class="t" style="left:697.7px;top:86.0px;font-size:14.8px;color:#000;transform:scaleX(1.0671);">АаБбВвГг,</div>
<div class="t" style="left:695.5px;top:115.0px;font-size:15px;color:#666;transform:scaleX(0.9920);">¶ Обычный</div>
<div class="t" style="left:787.7px;top:86.0px;font-size:14.8px;color:#000;transform:scaleX(1.0600);">АаБбВвГг,</div>
<div class="t" style="left:787.7px;top:115.0px;font-size:15px;color:#666;transform:scaleX(0.9815);">¶ Без инт...</div>
<div class="t" style="left:877.7px;top:83.0px;font-size:21.5px;color:#000;transform:scaleX(1.1008);">АаБбВ</div>
<div class="t" style="left:876.8px;top:115.0px;font-size:15px;color:#666;transform:scaleX(0.9913);">Заголово...</div>
<div class="t" style="left:967.7px;top:83.0px;font-size:19.5px;color:#000;font-style:italic;transform:scaleX(1.1074);clip-path:inset(-5px 3.5px -5px 0);-webkit-text-stroke:0.35px #000;">АаБбВв</div>
<div class="t" style="left:967.0px;top:115.0px;font-size:15px;color:#666;transform:scaleX(0.9886);">Заголово...</div>
<div class="t" style="left:1057.7px;top:83.0px;font-size:21.5px;color:#000;transform:scaleX(1.0994);">АаБбВ</div>
<div class="t" style="left:1061.5px;top:115.0px;font-size:15px;color:#666;">Название</div>
<div class="t" style="left:1197.7px;top:68.0px;font-size:15px;color:#444;transform:scaleX(0.9764);">Найти</div>
<div class="t" style="left:1175.0px;top:93.0px;font-size:11.5px;color:#555;font-weight:bold;transform:scaleX(1.0302);">a</div>
<div class="t" style="left:1181.9px;top:93.0px;font-size:11.5px;color:#aaa;transform:scaleX(0.8585);">b</div>
<div class="t" style="left:1183.3px;top:101.0px;font-size:11.5px;color:#555;font-weight:bold;transform:scaleX(0.8741);">a</div>
<div class="t" style="left:1189.1px;top:101.0px;font-size:11.5px;color:#6d8fb6;font-weight:bold;transform:scaleX(0.7961);">c</div>
<div class="t" style="left:1197.4px;top:95.0px;font-size:15px;color:#444;transform:scaleX(0.9732);">Заменить</div>
<div class="t" style="left:1197.7px;top:122.0px;font-size:15px;color:#444;transform:scaleX(0.9436);">Выделить</div>
<div class="t" style="left:338.2px;top:185.0px;font-size:18.7px;color:#000;font-family:'Liberation Serif',serif;-webkit-text-stroke:0.3px #000;">?</div>
<div class="t" style="left:376.0px;top:223.0px;font-size:18.7px;color:#000;font-family:'Liberation Serif',serif;transform:scaleX(0.9732);-webkit-text-stroke:0.3px #000;">CH<sub>3</sub>–C=O</div>
<div class="t" style="left:523.4px;top:223.0px;font-size:18.7px;color:#000;font-family:'Liberation Serif',serif;transform:scaleX(0.9883);-webkit-text-stroke:0.3px #000;">Назвіть усі сполуки .</div>
<div class="t" style="left:412.8px;top:299.0px;font-size:18.7px;color:#000;font-family:'Liberation Serif',serif;transform:scaleX(0.9549);-webkit-text-stroke:0.3px #000;">CH<sub>3</sub></div>
<div class="t" style="left:333.4px;top:337.0px;font-size:18.7px;color:#000;font-family:'Liberation Serif',serif;-webkit-text-stroke:0.3px #000;">29. Здійсніть перетворення:</div>
<div class="t" style="left:333.6px;top:375.0px;font-size:18.7px;color:#000;font-family:'Liberation Serif',serif;transform:scaleX(0.9893);-webkit-text-stroke:0.3px #000;">(C<sub>6</sub>H<sub>10</sub>O<sub>5</sub>)</div>
<div class="t" style="left:470.0px;top:375.0px;font-size:18.7px;color:#000;font-family:'Liberation Serif',serif;transform:scaleX(0.9817);-webkit-text-stroke:0.3px #000;">C<sub>6</sub>H<sub>12</sub>O<sub>6</sub></div>
<div class="t" style="left:605.6px;top:375.0px;font-size:18.7px;color:#000;font-family:'Liberation Serif',serif;transform:scaleX(0.9843);-webkit-text-stroke:0.3px #000;">C<sub>2</sub>H<sub>5</sub>–OH</div>
<div class="t" style="left:740.3px;top:375.0px;font-size:18.7px;color:#000;font-family:'Liberation Serif',serif;transform:scaleX(0.9642);-webkit-text-stroke:0.3px #000;">CO<sub>2</sub></div>
<div class="t" style="left:835.2px;top:375.0px;font-size:18.7px;color:#000;font-family:'Liberation Serif',serif;transform:scaleX(0.9849);-webkit-text-stroke:0.3px #000;">C<sub>6</sub>H<sub>12</sub>O<sub>6</sub></div>
<div class="t" style="left:333.4px;top:413.0px;font-size:18.7px;color:#000;font-family:'Liberation Serif',serif;transform:scaleX(1.0041);-webkit-text-stroke:0.3px #000;">Зазначте умови проходження реакцій і назви речовин.</div>
<div class="t" style="left:333.4px;top:451.0px;font-size:18.7px;color:#000;font-family:'Liberation Serif',serif;-webkit-text-stroke:0.3px #000;">30. Здійсніть перетворення:</div>
<div class="t" style="left:377.1px;top:487.0px;font-size:14.7px;color:#000;font-family:'Liberation Serif',serif;transform:scaleX(1.0085);-webkit-text-stroke:0.3px #000;">молочнокисле бродіння</div>
<div class="t" style="left:333.6px;top:522.0px;font-size:18.7px;color:#000;font-family:'Liberation Serif',serif;transform:scaleX(1.0086);-webkit-text-stroke:0.3px #000;">глюкоза</div>
<div class="t" style="left:534.1px;top:522.0px;font-size:18.7px;color:#000;font-family:'Liberation Serif',serif;-webkit-text-stroke:0.3px #000;">?</div>
<div class="t" style="left:607.5px;top:522.0px;font-size:18.7px;color:#000;font-family:'Liberation Serif',serif;transform:scaleX(0.9949);-webkit-text-stroke:0.3px #000;">оцтовий альдегід</div>
<div class="t" style="left:823.1px;top:522.0px;font-size:18.7px;color:#000;font-family:'Liberation Serif',serif;transform:scaleX(1.0063);-webkit-text-stroke:0.3px #000;">йодоформ</div>
<div class="t" style="left:379.7px;top:558.0px;font-size:14.7px;color:#000;font-family:'Liberation Serif',serif;-webkit-text-stroke:0.3px #000;">спиртове бродіння</div>
<div class="t" style="left:522.5px;top:558.0px;font-size:14.7px;color:#000;font-family:'Liberation Serif',serif;-webkit-text-stroke:0.3px #000;">?</div>
<div class="t" style="left:333.4px;top:626.0px;font-size:18.7px;color:#000;font-family:'Liberation Serif',serif;transform:scaleX(1.0050);-webkit-text-stroke:0.3px #000;">Зазначте умови проходження реакцій.</div>
<div class="t" style="left:1032.6px;top:609.0px;font-size:24.7px;color:rgba(115,115,115,0.5);transform:scaleX(1.0109);">Активация Windows</div>
<div class="t" style="left:1032.6px;top:642.0px;font-size:17.5px;color:rgba(115,115,115,0.42);transform:scaleX(1.0199);">Чтобы активировать Windows,</div>
<div class="t" style="left:1032.6px;top:667.0px;font-size:17.5px;color:rgba(115,115,115,0.42);transform:scaleX(1.0046);">перейдите в раздел &quot;Параметры&quot;.</div>
<div class="t" style="left:8.4px;top:699.0px;font-size:12.8px;color:#fff;transform:scaleX(0.9836);">СТРАНИЦА 8 ИЗ 8</div>
<div class="t" style="left:137.9px;top:699.0px;font-size:12.8px;color:#fff;transform:scaleX(0.9813);">ЧИСЛО СЛОВ: 1337</div>
<div class="t" style="left:310.7px;top:699.0px;font-size:12.8px;color:#fff;transform:scaleX(0.9936);">УКРАИНСКИЙ</div>
<div class="t" style="left:1329.6px;top:699.0px;font-size:12.8px;color:#fff;transform:scaleX(0.9461);">80 %</div>
<div class="t" style="left:1178.0px;top:736.0px;font-size:15.3px;color:#fff;transform:scaleX(0.9049);-webkit-text-stroke:0.25px #fff;">УКР</div>
<div class="t" style="left:1239.8px;top:724.0px;font-size:15px;color:#fff;transform:scaleX(0.8922);-webkit-text-stroke:0.25px #fff;">14:03</div>
<div class="t" style="left:1223.8px;top:747.0px;font-size:15px;color:#fff;transform:scaleX(0.8871);-webkit-text-stroke:0.25px #fff;">19.07.2021</div>
</div></body></html>
